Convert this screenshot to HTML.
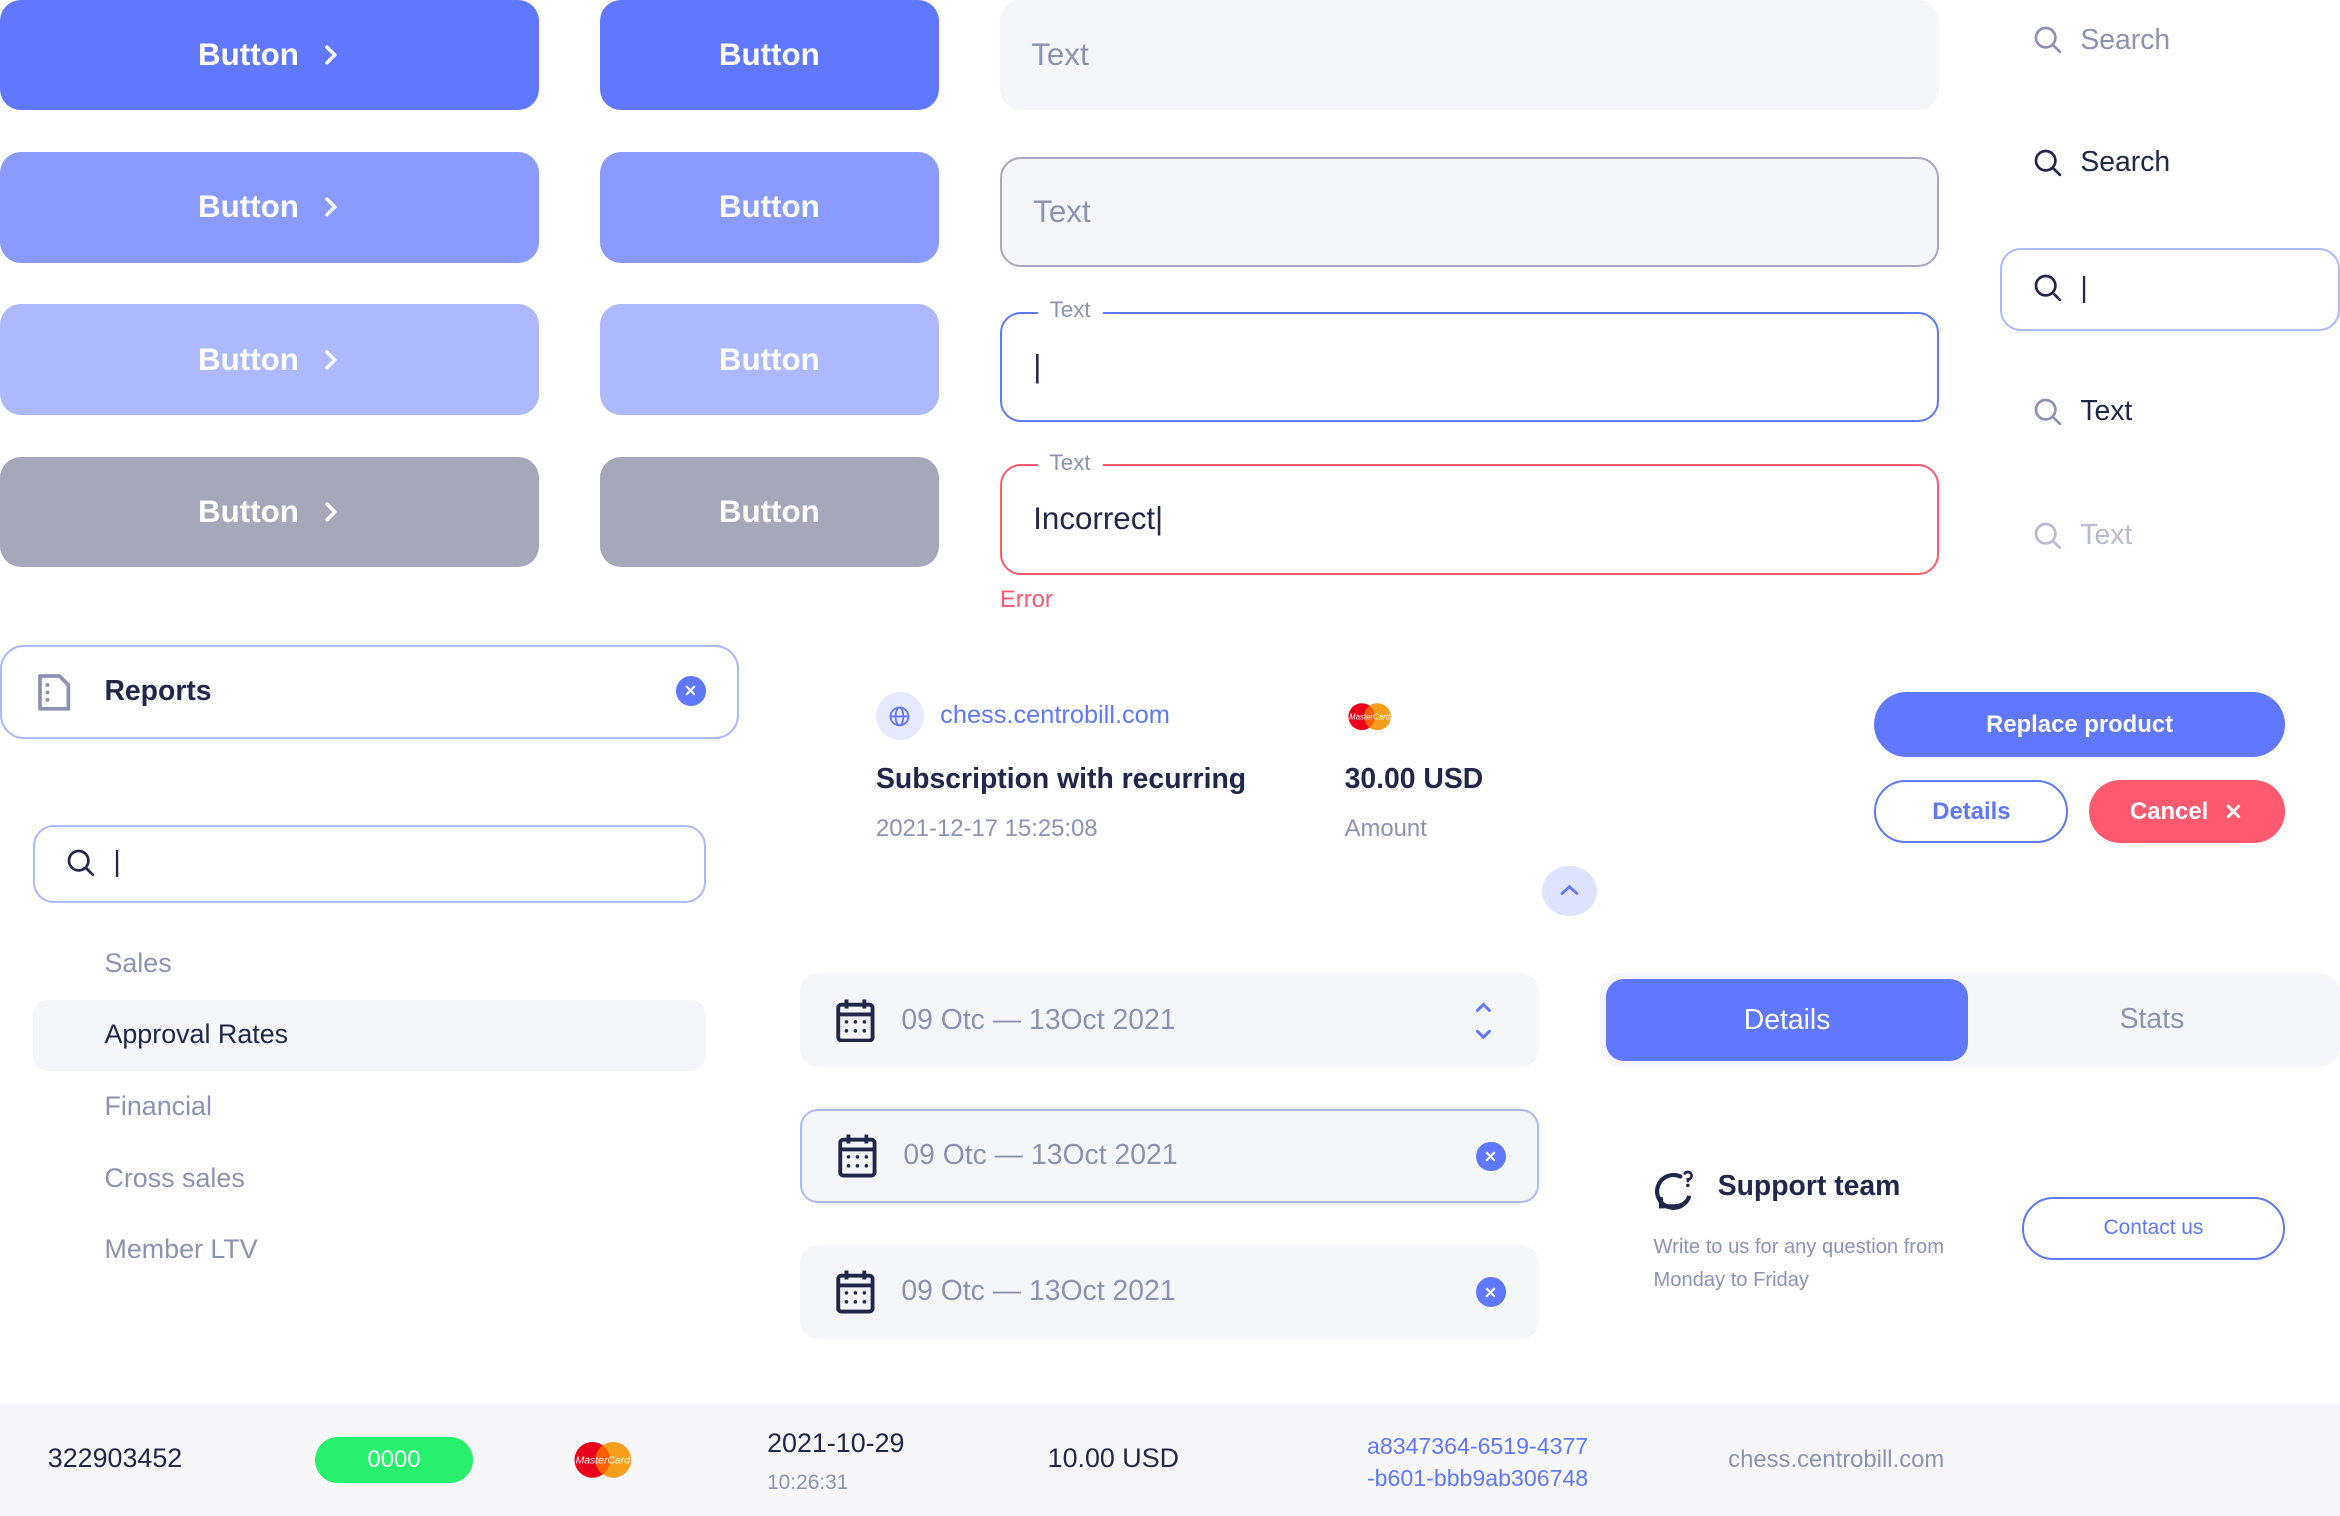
<!DOCTYPE html>
<html><head><meta charset="utf-8"><style>
*{box-sizing:border-box;margin:0;padding:0}
html,body{width:2340px;height:1516px;overflow:hidden;background:#fff}
#z{zoom:1.49235;width:1568px;height:1016px;position:relative;font-family:"Liberation Sans",sans-serif;color:#22264a}
.a{position:absolute}
.btn{position:absolute;border-radius:14px;color:#fff;font-size:21px;font-weight:bold;display:flex;align-items:center;justify-content:center;gap:14px}
.inp{position:absolute;left:670px;width:629px;height:74px;border-radius:14px;font-size:21px;display:flex;align-items:center;padding-left:21px;color:#8e92b2}
.lbl{position:absolute;top:-11px;left:24px;background:#fff;padding:0 8px;font-size:15px;color:#8e92b2}
.sr{position:absolute;left:1362px;display:flex;align-items:center;gap:12px;font-size:19px}
.mi{position:absolute;left:70px;font-size:18px;color:#8e92b2}
.dp{position:absolute;left:536px;width:495px;height:63px;border-radius:12px;background:#f5f6fa;display:flex;align-items:center;padding-left:24px;gap:18px;font-size:19px;color:#8e92b2}
.xc{position:absolute;width:20px;height:20px;border-radius:50%;background:#5f78ff;display:flex;align-items:center;justify-content:center}
</style></head><body><div id="z">
<svg width="0" height="0" style="position:absolute"><defs>
<symbol id="chev" viewBox="0 0 12 12"><path d="M4 1.5 8.5 6 4 10.5" fill="none" stroke="#fff" stroke-width="2" stroke-linecap="round" stroke-linejoin="round"/></symbol>
<symbol id="srch" viewBox="0 0 20 20"><circle cx="8.5" cy="8.5" r="6.5" fill="none" stroke="currentColor" stroke-width="1.8"/><path d="M13.5 13.5 18 18" stroke="currentColor" stroke-width="1.8" stroke-linecap="round"/></symbol>
<symbol id="x" viewBox="0 0 10 10"><path d="M2.5 2.5 7.5 7.5M7.5 2.5 2.5 7.5" stroke="#fff" stroke-width="1.4" stroke-linecap="round"/></symbol>
<symbol id="cal" viewBox="0 0 26 30"><rect x="1.5" y="4.5" width="23" height="24" rx="2" fill="none" stroke="#22264a" stroke-width="2.6"/><path d="M1.5 11h23M7 1v6M19 1v6" stroke="#22264a" stroke-width="2.6"/><g fill="#22264a"><circle cx="7" cy="16" r="1.2"/><circle cx="13" cy="16" r="1.2"/><circle cx="19" cy="16" r="1.2"/><circle cx="7" cy="22" r="1.2"/><circle cx="13" cy="22" r="1.2"/><circle cx="19" cy="22" r="1.2"/></g></symbol>
<symbol id="mc" viewBox="0 0 44 28"><circle cx="15" cy="14" r="12" fill="#eb001b"/><circle cx="29" cy="14" r="12" fill="#f79e1b"/><path d="M22 4.3a12 12 0 0 1 0 19.4a12 12 0 0 1 0-19.4z" fill="#ff5f00"/><text x="22" y="16.5" font-size="7" font-style="italic" fill="#fff" text-anchor="middle" font-family="Liberation Sans">MasterCard</text></symbol>
</defs></svg>

<!-- buttons -->
<div class="btn" style="left:0;top:0;width:361px;height:74px;background:#5f78ff">Button <svg width="14" height="16"><use href="#chev"/></svg></div>
<div class="btn" style="left:0;top:102px;width:361px;height:74px;background:#8a9bff">Button <svg width="14" height="16"><use href="#chev"/></svg></div>
<div class="btn" style="left:0;top:204px;width:361px;height:74px;background:#adb8ff">Button <svg width="14" height="16"><use href="#chev"/></svg></div>
<div class="btn" style="left:0;top:306px;width:361px;height:74px;background:#a6a7b8">Button <svg width="14" height="16"><use href="#chev"/></svg></div>
<div class="btn" style="left:402px;top:0;width:227px;height:74px;background:#5f78ff">Button</div>
<div class="btn" style="left:402px;top:102px;width:227px;height:74px;background:#8a9bff">Button</div>
<div class="btn" style="left:402px;top:204px;width:227px;height:74px;background:#adb8ff">Button</div>
<div class="btn" style="left:402px;top:306px;width:227px;height:74px;background:#a6a7b8">Button</div>

<!-- inputs -->
<div class="inp" style="top:0;background:#f5f6fa">Text</div>
<div class="inp" style="top:105px;background:#f5f6fa;border:1.5px solid #a6a8bb">Text</div>
<div class="inp" style="top:209px;border:1.5px solid #5f78ff;color:#22264a"><span class="lbl">Text</span>|</div>
<div class="inp" style="top:311px;border:1.5px solid #ff5a6e;color:#22264a"><span class="lbl">Text</span>Incorrect|</div>
<div class="a" style="left:670px;top:393px;font-size:16px;color:#ff5a6e">Error</div>

<!-- search column -->
<div class="sr" style="top:16px;color:#8e92b2"><svg width="20" height="20" style="color:#8e92b2"><use href="#srch"/></svg>Search</div>
<div class="sr" style="top:98px;color:#22264a"><svg width="20" height="20"><use href="#srch"/></svg>Search</div>
<div class="a" style="left:1340px;top:166px;width:228px;height:56px;border:1.5px solid #adb8ff;border-radius:14px"></div>
<div class="sr" style="top:182px;color:#22264a"><svg width="20" height="20"><use href="#srch"/></svg>|</div>
<div class="sr" style="top:265px;color:#22264a"><svg width="20" height="20" style="color:#8e92b2"><use href="#srch"/></svg>Text</div>
<div class="sr" style="top:348px;color:#b9bbcf"><svg width="20" height="20"><use href="#srch"/></svg>Text</div>

<!-- reports -->
<div class="a" style="left:0;top:432px;width:495px;height:63px;border:1.5px solid #adb8ff;border-radius:16px"></div>
<svg class="a" style="left:25px;top:451px" width="24" height="26" viewBox="0 0 24 26"><path d="M2 2h13l6 6v16H2z" fill="none" stroke="#8e92b2" stroke-width="2.5" stroke-linejoin="round"/><g fill="#8e92b2"><circle cx="7" cy="8" r="1.3"/><circle cx="7" cy="13" r="1.3"/><circle cx="7" cy="18" r="1.3"/></g></svg>
<div class="a" style="left:70px;top:452px;font-size:19px;font-weight:bold">Reports</div>
<div class="xc" style="left:453px;top:453px"><svg width="10" height="10"><use href="#x"/></svg></div>

<div class="a" style="left:22px;top:553px;width:451px;height:52px;border:1.5px solid #adb8ff;border-radius:14px"></div>
<div class="sr" style="left:44px;top:567px"><svg width="20" height="20"><use href="#srch"/></svg>|</div>

<div class="mi" style="top:635px">Sales</div>
<div class="a" style="left:22px;top:670px;width:451px;height:48px;background:#f5f6fa;border-radius:10px"></div>
<div class="mi" style="top:683px;color:#22264a">Approval Rates</div>
<div class="mi" style="top:731px">Financial</div>
<div class="mi" style="top:779px">Cross sales</div>
<div class="mi" style="top:827px">Member LTV</div>

<!-- transaction -->
<div class="a" style="left:587px;top:464px;width:32px;height:32px;border-radius:50%;background:#e6e9ff;display:flex;align-items:center;justify-content:center"><svg width="14" height="14" viewBox="0 0 14 14"><circle cx="7" cy="7" r="6" fill="none" stroke="#5f78ff" stroke-width="1.2"/><ellipse cx="7" cy="7" rx="2.6" ry="6" fill="none" stroke="#5f78ff" stroke-width="1.2"/><path d="M1 7h12" stroke="#5f78ff" stroke-width="1.2"/></svg></div>
<div class="a" style="left:630px;top:470px;font-size:17px;color:#5f78ff">chess.centrobill.com</div>
<div class="a" style="left:587px;top:511px;font-size:19px;font-weight:bold">Subscription with recurring</div>
<div class="a" style="left:587px;top:546px;font-size:16px;color:#8e92b2">2021-12-17 15:25:08</div>
<svg class="a" style="left:901px;top:470px" width="33" height="21"><use href="#mc"/></svg>
<div class="a" style="left:901px;top:511px;font-size:19px;font-weight:bold">30.00 USD</div>
<div class="a" style="left:901px;top:546px;font-size:16px;color:#8e92b2">Amount</div>
<div class="btn" style="left:1256px;top:464px;width:275px;height:43px;border-radius:22px;background:#5f78ff;font-size:16px">Replace product</div>
<div class="btn" style="left:1256px;top:523px;width:130px;height:42px;border-radius:21px;border:1.5px solid #5f78ff;color:#5f78ff;font-size:16px">Details</div>
<div class="btn" style="left:1400px;top:523px;width:131px;height:42px;border-radius:21px;background:#ff5a6e;font-size:16px;gap:10px">Cancel <svg width="14" height="14"><use href="#x"/></svg></div>
<div class="a" style="left:1033px;top:580px;width:37px;height:34px;border-radius:50%;background:#dfe3ff;display:flex;align-items:center;justify-content:center"><svg width="14" height="10" viewBox="0 0 14 10"><path d="M2 7 7 2.5 12 7" fill="none" stroke="#5f78ff" stroke-width="1.8" stroke-linecap="round"/></svg></div>

<!-- date pickers -->
<div class="dp" style="top:652px"><svg width="26" height="30"><use href="#cal"/></svg>09 Otc — 13Oct 2021</div>
<svg class="a" style="left:987px;top:670px" width="14" height="28" viewBox="0 0 14 28"><path d="M3 7 7 3 11 7M3 21 7 25 11 21" fill="none" stroke="#5f78ff" stroke-width="2" stroke-linecap="round"/></svg>
<div class="dp" style="top:743px;border:1.5px solid #adb8ff"><svg width="26" height="30"><use href="#cal"/></svg>09 Otc — 13Oct 2021</div>
<div class="xc" style="left:989px;top:765px"><svg width="10" height="10"><use href="#x"/></svg></div>
<div class="dp" style="top:834px"><svg width="26" height="30"><use href="#cal"/></svg>09 Otc — 13Oct 2021</div>
<div class="xc" style="left:989px;top:856px"><svg width="10" height="10"><use href="#x"/></svg></div>

<!-- tabs -->
<div class="a" style="left:1072px;top:652px;width:496px;height:63px;background:#f5f6fa;border-radius:14px"></div>
<div class="btn" style="left:1076px;top:656px;width:243px;height:55px;border-radius:12px;background:#5f78ff;font-weight:normal;font-size:19px">Details</div>
<div class="a" style="left:1320px;top:672px;width:244px;text-align:center;font-size:19px;color:#8e92b2">Stats</div>

<!-- support -->
<svg class="a" style="left:1109px;top:783px" width="28" height="28" viewBox="0 0 28 28"><path d="M17 5A11 11 0 1 0 23 18C22 22 18 25 13 25H4V20" fill="none" stroke="#22264a" stroke-width="2.8" stroke-linecap="round"/><path d="M20 3a2.5 2.5 0 1 1 2 4v1" fill="none" stroke="#22264a" stroke-width="1.8" stroke-linecap="round"/><circle cx="22" cy="11" r="1.2" fill="#22264a"/></svg>
<div class="a" style="left:1151px;top:784px;font-size:19px;font-weight:bold">Support team</div>
<div class="a" style="left:1108px;top:825px;font-size:13.5px;line-height:22px;color:#8e92b2">Write to us for any question from<br>Monday to Friday</div>
<div class="btn" style="left:1355px;top:802px;width:176px;height:42px;border-radius:21px;border:1.5px solid #5f78ff;color:#5f78ff;font-size:14px;font-weight:normal">Contact us</div>

<!-- bottom row -->
<div class="a" style="left:0;top:940px;width:1568px;height:76px;background:#f7f7f9"></div>
<div class="a" style="left:32px;top:967px;font-size:18px">322903452</div>
<div class="btn" style="left:211px;top:963px;width:106px;height:31px;border-radius:16px;background:#27f06c;font-size:16px;font-weight:normal">0000</div>
<svg class="a" style="left:382px;top:964px" width="44" height="28"><use href="#mc"/></svg>
<div class="a" style="left:514px;top:957px;font-size:18px">2021-10-29</div>
<div class="a" style="left:514px;top:986px;font-size:14px;color:#8e92b2">10:26:31</div>
<div class="a" style="left:702px;top:967px;font-size:18px">10.00 USD</div>
<div class="a" style="left:916px;top:958px;font-size:15.5px;line-height:22px;color:#5f78ff">a8347364-6519-4377<br>-b601-bbb9ab306748</div>
<div class="a" style="left:1158px;top:969px;font-size:16px;color:#8e92b2">chess.centrobill.com</div>
</div></body></html>
